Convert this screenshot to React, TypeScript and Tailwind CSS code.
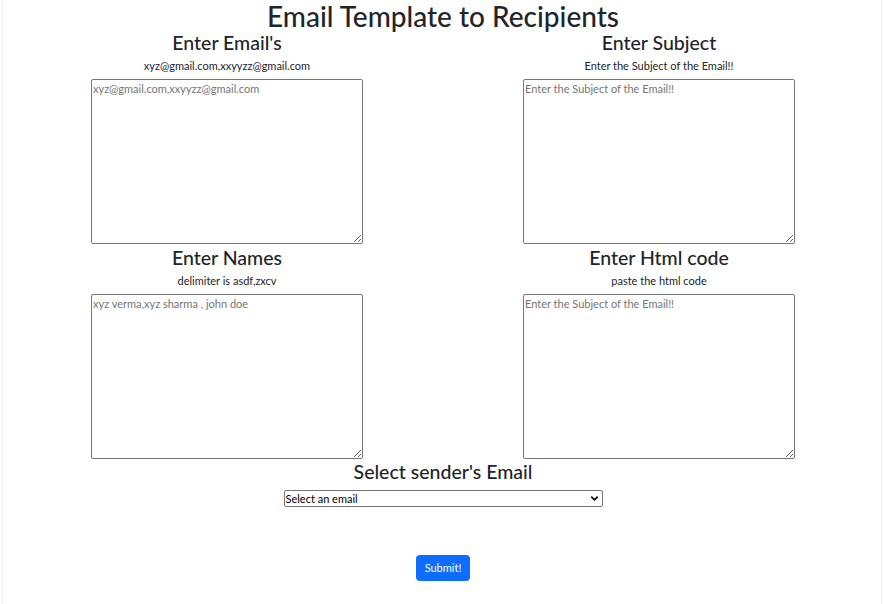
import { ChevronDown } from 'lucide-react';

const font = { fontFamily: '"Lato", "Noto Sans", sans-serif' };

function Field({ title, hint, placeholder }: { title: string; hint: string; placeholder: string }) {
  return (
    <div className="flex flex-col items-center">
      <h2 className="text-[19.5px] leading-[26px] font-medium text-[#212529]">{title}</h2>
      <p className="text-[11px] leading-[14px] mt-[3px] text-[#212529]">{hint}</p>
      <textarea
        placeholder={placeholder}
        className="block mt-[6px] w-[272px] h-[165px] border border-[#767676] rounded-[2px] px-[1px] py-[2px]
                   text-[11px] leading-[14px] placeholder:text-[#757575] bg-white"
      />
    </div>
  );
}

export default function App() {
  return (
    <div className="min-h-screen bg-white" style={font}>
      <div className="mx-[2px] min-h-[604px] border-x border-[#f1f1f1] pl-[8px] pr-[6px]">
        <h1 className="text-center text-[28px] leading-[32px] font-medium text-[#212529]">
          Email Template to Recipients
        </h1>

        <div className="grid grid-cols-2 gap-y-[1px] -mt-[2px]">
          <Field title="Enter Email's" hint="xyz@gmail.com,xxyyzz@gmail.com" placeholder="xyz@gmail.com,xxyyzz@gmail.com" />
          <Field title="Enter Subject" hint="Enter the Subject of the Email!!" placeholder="Enter the Subject of the Email!!" />
          <Field title="Enter Names" hint="delimiter is asdf,zxcv" placeholder="xyz verma,xyz sharma , john doe" />
          <Field title="Enter Html code" hint="paste the html code" placeholder="Enter the Subject of the Email!!" />
        </div>

        <div className="flex flex-col items-center">
          <h2 className="text-[19.5px] leading-[26px] font-medium text-[#212529]">Select sender's Email</h2>
          <div className="relative mt-[5px] w-[319px]">
            <select className="block appearance-none w-full h-[17px] border border-[#767676] rounded-[2px] bg-white
                               text-[11px] leading-[14px] text-black pl-[1px] py-0">
              <option>Select an email</option>
              <option>sender@gmail.com</option>
            </select>
            <ChevronDown className="absolute right-[3px] top-[3px] w-[11px] h-[11px] text-black pointer-events-none" strokeWidth={3.5} />
          </div>
          <button className="mt-[48px] bg-[#0d6efd] text-white text-[11px] leading-[14px] px-[9px] py-[6px] rounded-[4px]">
            Submit!
          </button>
        </div>
      </div>
    </div>
  );
}
